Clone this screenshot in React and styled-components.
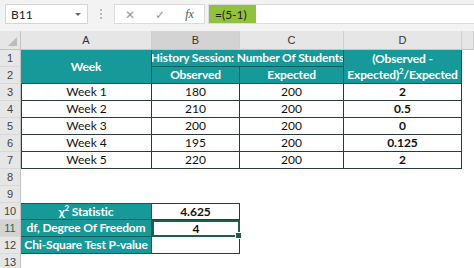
import React from 'react';
import styled, { createGlobalStyle } from 'styled-components';

const TEAL = '#17999a';
const EDGE = '#2b3a3a';
const TEAL_EDGE = '#0f5f5f';

const GlobalStyle = createGlobalStyle`
  html, body {
    margin: 0;
    padding: 0;
    background: #ffffff;
    overflow: hidden;
  }
  body {
    font-family: Lato, "Liberation Sans", sans-serif;
  }
`;

const Page = styled.div`
  width: 474px;
  height: 268px;
  overflow: hidden;
  background: #ffffff;
`;

const Toolbar = styled.div`
  display: flex;
  align-items: center;
  height: 31px;
  padding: 0 0 3px 5px;
  box-sizing: border-box;
  background: #f3f3f3;
`;

const NameBox = styled.div`
  display: flex;
  align-items: center;
  justify-content: space-between;
  width: 83px;
  height: 20px;
  box-sizing: border-box;
  padding: 0 6px 0 5px;
  background: #fff;
  border: 1px solid #d4d4d4;
  font-size: 12px;
  color: #222;
`;

const Caret = styled.span`
  width: 0;
  height: 0;
  border-left: 3px solid transparent;
  border-right: 3px solid transparent;
  border-top: 3px solid #666;
`;

const Dots = styled.div`
  width: 26px;
  display: flex;
  flex-direction: column;
  align-items: center;
  gap: 2px;
  & span {
    width: 2px;
    height: 2px;
    background: #b8b8b8;
  }
`;

const FxBox = styled.div`
  display: flex;
  align-items: center;
  justify-content: space-around;
  width: 91px;
  height: 20px;
  box-sizing: border-box;
  background: #fff;
  border: 1px solid #dcdcdc;
  color: #9a9a9a;
  font-size: 12px;
`;

const Fx = styled.span`
  font-family: "Liberation Serif", serif;
  font-style: italic;
  font-size: 12px;
  color: #555;
`;

const Formula = styled.div`
  flex: 1;
  display: flex;
  height: 20px;
  margin-left: 3px;
  box-sizing: border-box;
  background: #fff;
  border: 1px solid #dcdcdc;
  border-right: none;
`;

const Highlight = styled.span`
  display: flex;
  align-items: center;
  padding: 0 3px 0 6px;
  width: 38px;
  background: #92c13c;
  color: #1d1d1d;
  font-size: 12px;
`;

const Sheet = styled.div`
  display: grid;
  grid-template-columns: 21px 131px 88px 104px 118px 12px;
  grid-template-rows: 19px repeat(13, 17px);
  font-size: 12px;
`;

const Corner = styled.div`
  grid-column: 1;
  grid-row: 1;
  background: #e6e6e6;
  border-bottom: 1px solid #c3c3c3;
  border-right: 1px solid #c3c3c3;
  position: relative;
  &::after {
    content: '';
    position: absolute;
    right: 3px;
    bottom: 3px;
    width: 0;
    height: 0;
    border-left: 9px solid transparent;
    border-bottom: 9px solid #bcbcbc;
  }
`;

const ColHead = styled.div`
  grid-row: 1;
  grid-column: ${(p) => p.$col};
  display: flex;
  align-items: center;
  justify-content: center;
  background: ${(p) => (p.$active ? '#d3d3d3' : '#e6e6e6')};
  border-bottom: 1px solid #c3c3c3;
  border-right: 1px solid #cfcfcf;
  color: #333;
  font-family: "Liberation Sans", sans-serif;
  font-size: 11px;
`;

const RowHead = styled.div`
  grid-column: 1;
  grid-row: ${(p) => p.$row};
  display: flex;
  align-items: center;
  justify-content: center;
  background: ${(p) => (p.$active ? '#d3d3d3' : '#e6e6e6')};
  border-right: 1px solid #c3c3c3;
  border-bottom: 1px solid #d8d8d8;
  color: ${(p) => (p.$active ? '#1f6b45' : '#444')};
  font-family: "Liberation Sans", sans-serif;
  font-size: 11px;
`;

const Cell = styled.div`
  grid-column: ${(p) => p.$col};
  grid-row: ${(p) => p.$row};
  display: flex;
  flex-direction: column;
  align-items: center;
  justify-content: center;
  box-sizing: border-box;
  line-height: 16px;
  white-space: nowrap;
  overflow: hidden;
  letter-spacing: ${(p) => (p.$teal ? '-0.15px' : '0')};
  background: ${(p) => (p.$teal ? TEAL : '#fff')};
  color: ${(p) => (p.$teal ? '#fff' : '#111')};
  font-weight: ${(p) => (p.$bold || p.$teal ? 700 : 400)};
  border-right: 1px solid ${(p) => (p.$teal ? TEAL_EDGE : EDGE)};
  border-bottom: 1px solid ${(p) => (p.$teal ? TEAL_EDGE : EDGE)};
  border-top: ${(p) => (p.$top ? `1px solid ${p.$teal ? TEAL_EDGE : EDGE}` : 'none')};
  border-left: ${(p) => (p.$left ? `1px solid ${EDGE}` : 'none')};
  & sup {
    font-size: 8px;
    line-height: 0;
  }
`;

const Selected = styled(Cell)`
  position: relative;
  overflow: visible;
  border: 2px solid #1d5f4a;
  &::after {
    content: '';
    position: absolute;
    right: -4px;
    bottom: -4px;
    width: 5px;
    height: 5px;
    background: #1d5f4a;
    border: 1px solid #fff;
  }
`;

const rows = [
  ['Week 1', '180', '200', '2'],
  ['Week 2', '210', '200', '0.5'],
  ['Week 3', '200', '200', '0'],
  ['Week 4', '195', '200', '0.125'],
  ['Week 5', '220', '200', '2'],
];

export default function App() {
  return (
    <Page>
      <GlobalStyle />
      <Toolbar>
        <NameBox>
          B11
          <Caret />
        </NameBox>
        <Dots>
          <span />
          <span />
          <span />
        </Dots>
        <FxBox>
          <span>✕</span>
          <span>✓</span>
          <Fx>fx</Fx>
        </FxBox>
        <Formula>
          <Highlight>=(5-1)</Highlight>
        </Formula>
      </Toolbar>

      <Sheet>
        <Corner />
        {['A', 'B', 'C', 'D', ''].map((c, i) => (
          <ColHead key={i} $col={i + 2} $active={c === 'B'}>
            {c}
          </ColHead>
        ))}
        {Array.from({ length: 13 }, (_, i) => (
          <RowHead key={i} $row={i + 2} $active={i + 1 === 11}>
            {i + 1}
          </RowHead>
        ))}

        <Cell $teal $col="2" $row="2 / 4">Week</Cell>
        <Cell $teal $col="3 / 5" $row="2">History Session: Number Of Students</Cell>
        <Cell $teal $col="5" $row="2 / 4">
          <span>(Observed -</span>
          <span>
            Expected)<sup>2</sup>/Expected
          </span>
        </Cell>
        <Cell $teal $col="3" $row="3">Observed</Cell>
        <Cell $teal $col="4" $row="3">Expected</Cell>

        {rows.map((r, i) => (
          <React.Fragment key={r[0]}>
            <Cell $left $col="2" $row={i + 4}>{r[0]}</Cell>
            <Cell $col="3" $row={i + 4}>{r[1]}</Cell>
            <Cell $col="4" $row={i + 4}>{r[2]}</Cell>
            <Cell $bold $col="5" $row={i + 4}>{r[3]}</Cell>
          </React.Fragment>
        ))}

        <Cell $teal $top $col="2" $row="11">
          <span>
            χ<sup>2</sup> Statistic
          </span>
        </Cell>
        <Cell $bold $top $col="3" $row="11">4.625</Cell>
        <Cell $teal $col="2" $row="12">df, Degree Of Freedom</Cell>
        <Selected $bold $col="3" $row="12">4</Selected>
        <Cell $teal $col="2" $row="13">Chi-Square Test P-value</Cell>
        <Cell $col="3" $row="13" />
      </Sheet>
    </Page>
  );
}
